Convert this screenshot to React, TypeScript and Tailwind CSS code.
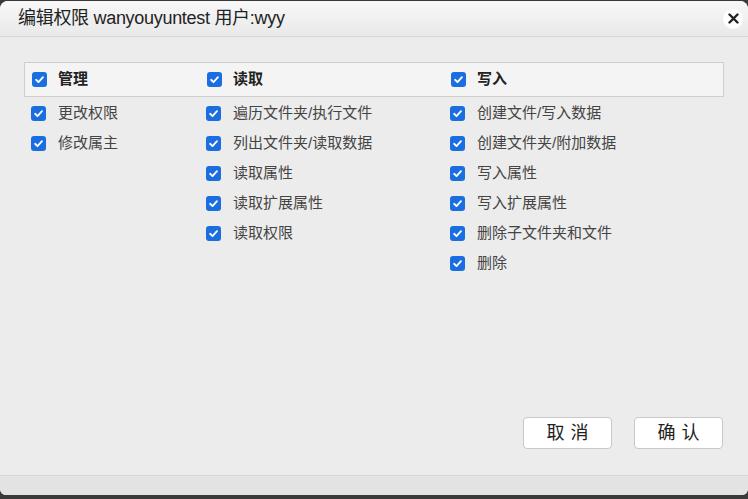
import React from 'react';

const FONT = { fontFamily: '"Liberation Sans", "Noto Sans CJK SC", sans-serif' };

interface Group {
  title: string;
  items: string[];
}

const groups: Group[] = [
  { title: '管理', items: ['更改权限', '修改属主'] },
  {
    title: '读取',
    items: ['遍历文件夹/执行文件', '列出文件夹/读取数据', '读取属性', '读取扩展属性', '读取权限'],
  },
  {
    title: '写入',
    items: ['创建文件/写入数据', '创建文件夹/附加数据', '写入属性', '写入扩展属性', '删除子文件夹和文件', '删除'],
  },
];

const Check: React.FC = () => (
  <span className="w-[15px] h-[15px] rounded-[3px] bg-[#1a6ee0] flex items-center justify-center shrink-0">
    <svg width="11" height="11" viewBox="0 0 12 12">
      <path d="M2.3 6.3 L4.9 8.8 L9.8 3.4" fill="none" stroke="white" strokeWidth="2" strokeLinecap="round" strokeLinejoin="round" />
    </svg>
  </span>
);

export default function App() {
  return (
    <div className="w-[748px] h-[499px] bg-[#3a3a3a] pt-[1px] pb-[4px]" style={FONT}>
      <div className="h-full flex flex-col bg-[#ececec] rounded-t-[8px] rounded-b-[6px] overflow-hidden">
        {/* title bar */}
        <div className="h-[36px] shrink-0 flex items-center justify-between pl-[18px] pr-[5px] bg-gradient-to-b from-[#f8f8f8] to-[#e9e9e9] border-b border-[#d6d6d6]">
          <span className="text-[18px] text-[#222] tracking-[-0.3px]">编辑权限 wanyouyuntest 用户:wyy</span>
          <span className="w-[20px] h-[20px] rounded-full bg-white flex items-center justify-center">
            <svg width="11" height="11" viewBox="0 0 11 11">
              <path d="M1.5 1.5 L9.5 9.5 M9.5 1.5 L1.5 9.5" stroke="#222" strokeWidth="2.4" strokeLinecap="round" />
            </svg>
          </span>
        </div>

        {/* body */}
        <div className="flex-1 flex flex-col pt-[25px] px-[24px] pb-[26px]">
          <div className="h-[35px] border border-[#cfcfcf] bg-[#f4f4f4] grid grid-cols-[175px_244px_1fr] items-center pl-[7px]">
            {groups.map((g) => (
              <div key={g.title} className="flex items-center gap-[11px]">
                <Check />
                <span className="text-[15px] font-bold text-[#222]">{g.title}</span>
              </div>
            ))}
          </div>
          <div className="grid grid-cols-[175px_244px_1fr] pl-[7px] mt-[1px]">
            {groups.map((g) => (
              <div key={g.title} className="flex flex-col">
                {g.items.map((it) => (
                  <div key={it} className="h-[30px] flex items-center gap-[12px]">
                    <Check />
                    <span className="text-[15px] text-[#444]">{it}</span>
                  </div>
                ))}
              </div>
            ))}
          </div>

          <div className="mt-auto flex justify-end gap-[22px] pr-[1px]">
            <button className="w-[89px] h-[32px] bg-white border border-[#c8c8c8] rounded-[4px] text-[18px] text-[#222] tracking-[6px] pl-[6px]">
              取消
            </button>
            <button className="w-[89px] h-[32px] bg-white border border-[#c8c8c8] rounded-[4px] text-[18px] text-[#222] tracking-[6px] pl-[6px]">
              确认
            </button>
          </div>
        </div>

        {/* footer */}
        <div className="h-[20px] shrink-0 bg-[#e3e3e3] border-t border-[#d6d6d6]" />
      </div>
    </div>
  );
}
